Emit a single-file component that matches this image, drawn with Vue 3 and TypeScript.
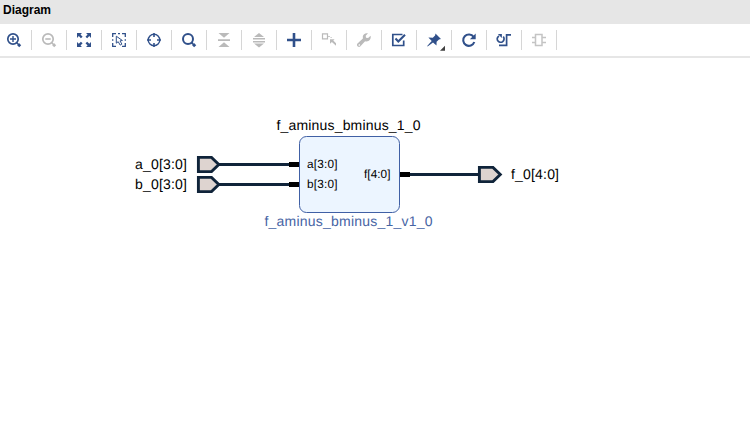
<script setup lang="ts">
interface Tool {
  name: string
  disabled?: boolean
}

const tools: Tool[] = [
  { name: 'zoom-in' },
  { name: 'zoom-out', disabled: true },
  { name: 'fit' },
  { name: 'select-area' },
  { name: 'center' },
  { name: 'search' },
  { name: 'collapse', disabled: true },
  { name: 'expand', disabled: true },
  { name: 'add' },
  { name: 'make-external', disabled: true },
  { name: 'customize', disabled: true },
  { name: 'validate' },
  { name: 'pin' },
  { name: 'regenerate' },
  { name: 'optimize' },
  { name: 'interface', disabled: true },
]
</script>

<template>
  <main class="window">
    <header class="title"><span>Diagram</span></header>
    <nav class="toolbar">
      <template v-for="tool in tools" :key="tool.name">
        <svg class="icon" :class="{ disabled: tool.disabled }" viewBox="0 0 16 16">
          <g v-if="tool.name === 'zoom-in' || tool.name === 'zoom-out'" class="line">
            <circle cx="7" cy="7" r="5.2" stroke-width="1.7" />
            <path v-if="tool.name === 'zoom-in'" d="M4 7H10M7 4V10" stroke-width="1.4" />
            <path v-else d="M4.3 7H9.7" stroke-width="1.6" />
            <path d="M10.8 10.8L12 12" stroke-width="1.6" />
            <path d="M12 12L14.2 14.2" stroke-width="2.8" />
          </g>
          <g v-else-if="tool.name === 'fit'">
            <path class="fill" d="M1 1H6L4.5 2.6L6.6 4.7L4.9 6.2L2.8 4.1L1 6Z M15 1V6L13.3 4.1L11.2 6.2L9.5 4.7L11.6 2.6L10 1Z M1 15V10L2.8 11.8L4.9 9.7L6.6 11.3L4.5 13.4L6 15Z M15 15H10L11.6 13.4L9.5 11.3L11.2 9.7L13.3 11.8L15 10Z" />
          </g>
          <g v-else-if="tool.name === 'select-area'" class="line">
            <path d="M1.7 5V1.7H5M11 1.7H14.3V5M14.3 11V14.3H11M5 14.3H1.7V11M7 1.7H9M1.7 7.2V8.8M14.3 7.2V8.8" stroke-width="1.3" />
            <path d="M5.3 4.2V11.2L7.2 9.7L9.2 13.1L10.9 12.1L9 8.9L11.4 8.5Z" stroke-width="1" />
          </g>
          <g v-else-if="tool.name === 'center'" class="line">
            <circle cx="8" cy="8" r="5.8" stroke-width="1.4" />
            <path d="M8 1V5M8 11V15M1 8H5M11 8H15" stroke-width="1.6" />
          </g>
          <g v-else-if="tool.name === 'search'" class="line">
            <circle cx="7" cy="7" r="5" stroke-width="2" />
            <path d="M10.5 10.5L12 12" stroke-width="2" />
            <path d="M12 12L14.2 14.2" stroke-width="3" />
          </g>
          <path v-else-if="tool.name === 'collapse'" class="fill" d="M2.5 1H13.5L8 5.8Z M2 7.2H14V8.9H2Z M8 10.2L13.5 15H2.5Z" />
          <path v-else-if="tool.name === 'expand'" class="fill" d="M8 1L13 5H3Z M2 6H14V7.5H2Z M2 9H14V10.5H2Z M3 11.4H13L8 15.4Z" />
          <path v-else-if="tool.name === 'add'" class="fill" d="M6.7 1H9.3V6.7H15V9.3H9.3V15H6.7V9.3H1V6.7H6.7Z" />
          <g v-else-if="tool.name === 'make-external'">
            <path class="line" d="M1.5 1.8H6.5V6.8H1.5ZM7.3 4.5H8.8M9.6 5.5H10.6" stroke-width="1.2" />
            <path class="fill" d="M9 7.2H13.6L12.3 8.5L15 11.2V13.8L10.9 9.9L9 11.8Z" />
          </g>
          <path v-else-if="tool.name === 'customize'" class="fill" d="M14.6 3.7L12.1 6L10 5.7L9.7 3.8L12 1.3C9.5.6 7 2.2 6.8 4.6L6.9 6.5L1.5 11.5C-.1 13.3 2.3 16 4.2 14.5L9.1 9.2C12.6 10.1 15.4 7.5 14.6 3.7Z M3.1 12.2A.8.8 0 1 1 3 13.7A.8.8 0 0 1 3.1 12.2Z" fill-rule="evenodd" />
          <g v-else-if="tool.name === 'validate'" class="line">
            <path d="M11.5 2.5H1.8V13.5H12.7V8.5" stroke-width="1.7" />
            <path d="M4.5 6.6L7.3 9.4L14 2.7" stroke-width="2.1" />
          </g>
          <g v-else-if="tool.name === 'pin'">
            <path class="fill" d="M9.5 1.5L15 7L13 7.5L10.6 9.8L10.5 13.4L7 10.4L1.6 14.4L1.2 14L5.7 9L2.4 5.5L6.8 5.7L9.1 3.6Z" />
          </g>
          <g v-else-if="tool.name === 'regenerate'">
            <path class="line" d="M12.6 4.9A5.7 5.7 0 1 0 13.3 10" stroke-width="2.1" />
            <path class="fill" d="M14.7 1.4V7.2H8.9Z" />
          </g>
          <g v-else-if="tool.name === 'optimize'">
            <path class="line" d="M3 3.9A3.4 3.4 0 1 0 7.2 4.6M3 13.4H10.6V2.8H15" stroke-width="1.7" />
            <path class="fill" d="M1.9 2.1H5.9V5.9Z" />
          </g>
          <g v-else class="line interface">
            <path d="M4.5 2.5H11V13.5H4.5ZM1 5.5H4.5M1 10.5H4.5M11 5.5H15M11 10.5H15" stroke-width="1.5" />
          </g>
          <path v-if="tool.name === 'pin'" class="menu-mark" d="M19 13.8V18.8H14Z" />
        </svg>
        <span class="separator"></span>
      </template>
    </nav>
    <svg class="canvas" viewBox="0 58 750 385">
      <g class="wire">
        <path d="M218 164.5H291M218 184.5H291M409 174.5H480" />
      </g>
      <g class="port">
        <path d="M198.4 157.4H211.5L218.8 164.5L211.5 171.6H198.4Z" />
        <path d="M198.4 177.4H211.5L218.8 184.5L211.5 191.6H198.4Z" />
        <path d="M479.4 167.4H493L500.3 174.5L493 181.6H479.4Z" />
      </g>
      <rect class="block" x="299.5" y="136.5" width="100" height="76" rx="7" />
      <path class="pins" d="M289 164.5H299M289 184.5H299M400 174.5H410" />
      <g class="label">
        <text x="276.5" y="130" textLength="144">f_aminus_bminus_1_0</text>
        <text x="135" y="169" textLength="52">a_0[3:0]</text>
        <text x="135" y="189" textLength="52">b_0[3:0]</text>
        <text x="511" y="179" textLength="48">f_0[4:0]</text>
        <text class="module" x="264.5" y="226" textLength="168">f_aminus_bminus_1_v1_0</text>
      </g>
      <g class="pin-label">
        <text x="307" y="168" textLength="30.5">a[3:0]</text>
        <text x="307" y="188" textLength="30.5">b[3:0]</text>
        <text x="364" y="178" textLength="26.5">f[4:0]</text>
      </g>
    </svg>
  </main>
</template>

<style>
body {
  margin: 0;
  background: #fff;
}
</style>

<style scoped>
.window {
  width: 750px;
  height: 443px;
  display: flex;
  flex-direction: column;
  overflow: hidden;
  font-family: "Liberation Sans", Arial, sans-serif;
}
.title {
  box-sizing: border-box;
  flex: 0 0 24px;
  padding: 3px 3px 0;
  background: #e6e6e6;
  color: #000;
  font-size: 12px;
  font-weight: 700;
  line-height: 14px;
}
.toolbar {
  box-sizing: border-box;
  flex: 0 0 34px;
  display: flex;
  align-items: center;
  gap: 9px;
  padding-left: 6px;
  border-bottom: 2px solid #e6e6e6;
}
.icon {
  flex: 0 0 16px;
  height: 16px;
  color: #30508a;
  overflow: visible;
}
.icon.disabled {
  color: #bababa;
}
.line {
  fill: none;
  stroke: currentColor;
}
.interface {
  stroke: #c4c4c4;
}
.fill {
  fill: currentColor;
}
.menu-mark {
  fill: #404040;
}
.separator {
  flex: 0 0 1px;
  height: 20px;
  background: #d6d6d6;
}
.canvas {
  flex: 0 0 385px;
  width: 750px;
}
.wire {
  stroke: #10243a;
  stroke-width: 3;
}
.port {
  fill: #ded4d0;
  stroke: #10243a;
  stroke-width: 2.9;
}
.block {
  fill: #ecf5ff;
  stroke: #4060a5;
}
.pins {
  stroke: #000;
  stroke-width: 5;
}
.label {
  font-size: 14px;
  text-rendering: geometricPrecision;
}
.module {
  fill: #4664a4;
}
.pin-label {
  font-size: 11.8px;
  text-rendering: geometricPrecision;
}
</style>
